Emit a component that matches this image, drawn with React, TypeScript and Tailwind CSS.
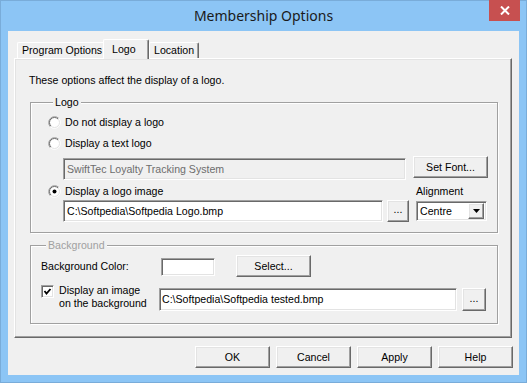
import React from "react";

const raised =
  "border border-t-white border-l-white border-r-[#696969] border-b-[#696969] shadow-[inset_-1px_-1px_0_#a0a0a0,inset_1px_1px_0_#e3e3e3] bg-[#f0f0f0]";
const sunken =
  "border border-t-[#a0a0a0] border-l-[#a0a0a0] border-r-white border-b-white shadow-[inset_1px_1px_0_#696969,inset_-1px_-1px_0_#e3e3e3]";
const group =
  "border border-[#a0a0a0] shadow-[1px_1px_0_white,inset_1px_1px_0_white]";

function Radio({ checked }: { checked?: boolean }) {
  return (
    <svg width="13" height="13" viewBox="0 0 13 13" className="shrink-0">
      <circle cx="6.5" cy="6.5" r="5.5" fill="white" />
      <path d="M2.26 10.74 A6 6 0 0 1 10.74 2.26" stroke="#a0a0a0" fill="none" />
      <path d="M10.74 2.26 A6 6 0 0 1 2.26 10.74" stroke="#ffffff" fill="none" />
      <path d="M2.96 10.04 A5 5 0 0 1 10.04 2.96" stroke="#696969" fill="none" />
      <path d="M10.04 2.96 A5 5 0 0 1 2.96 10.04" stroke="#e3e3e3" fill="none" />
      {checked && <circle cx="6.5" cy="6.5" r="2" fill="#000" />}
    </svg>
  );
}

function Check() {
  return (
    <div className={`${sunken} bg-white w-[13px] h-[13px] shrink-0 flex items-center justify-center`}>
      <svg width="9" height="9" viewBox="0 0 9 9">
        <polyline points="1.5,4 3.5,6.5 7.5,2" stroke="#000" strokeWidth="1.8" fill="none" />
      </svg>
    </div>
  );
}

function Btn({ label, className = "" }: { label: string; className?: string }) {
  return (
    <button className={`${raised} shrink-0 flex items-center justify-center text-[10.6px] text-black ${className}`}>
      {label}
    </button>
  );
}

function Window() {
  return (
    <div className="w-[527px] h-[383px] bg-[#8cc5f5] border border-[#79acd9] flex flex-col font-['Liberation_Sans',Arial,sans-serif] text-[10.6px] leading-[13px] text-black whitespace-nowrap select-none">
      {/* title bar */}
      <div className="relative h-[30px] flex items-center justify-center">
        <span className="font-['Noto_Sans',sans-serif] text-[14px] text-[#1a1a1a] -mt-[1px]">Membership Options</span>
        <div className="absolute right-[6px] top-[-1px] w-[31px] h-[21px] bg-[#c75050] flex items-center justify-center">
          <svg width="10" height="9" viewBox="0 0 10 9">
            <path d="M1 0.5 L9 8.5 M9 0.5 L1 8.5" stroke="white" strokeWidth="2" />
          </svg>
        </div>
      </div>

      {/* client */}
      <div className="ml-[7px] w-[511px] h-[344px] bg-[#f0f0f0] flex flex-col">
        {/* tabs */}
        <div className="ml-[9px] mt-[8px] h-[20px] -mb-[1px] flex items-start">
          <div className="shrink-0 mt-[3px] h-[16px] w-[86px] border-l border-t border-white rounded-tl-[2px] flex items-center pl-[4px]">
            Program Options
          </div>
          <div className="shrink-0 relative z-10 h-[20px] w-[46px] bg-[#f0f0f0] border-l border-t border-r border-l-white border-t-white border-r-[#696969] rounded-t-[2px] shadow-[inset_-1px_0_0_#a0a0a0] flex items-start pt-[3px] pl-[8px]">
            Logo
          </div>
          <div className="shrink-0 mt-[3px] h-[16px] w-[50px] border-l border-t border-r border-l-white border-t-white border-r-[#696969] rounded-t-[2px] shadow-[inset_-1px_0_0_#a0a0a0] flex items-center pl-[4px]">
            Location
          </div>
        </div>

        {/* panel */}
        <div className={`${raised} ml-[6px] w-[498px] h-[280px] flex flex-col`}>
          <p className="mt-[15px] ml-[14px]">These options affect the display of a logo.</p>

          <fieldset className={`${group} mt-[9px] ml-[15px] w-[468px] pl-[17px] pb-[10px]`}>
            <legend className="ml-[5px] px-[2px] bg-[#f0f0f0] leading-[13px]">Logo</legend>
            <div className="mt-[7px] h-[13px] flex items-center gap-[4px]">
              <Radio />
              <span>Do not display a logo</span>
            </div>
            <div className="mt-[8px] h-[13px] flex items-center gap-[4px]">
              <Radio />
              <span>Display a text logo</span>
            </div>
            <div className="mt-[6px] h-[24px] flex items-start ml-[15px]">
              <div className={`${sunken} mt-[2px] h-[22px] w-[343px] bg-[#f0f0f0] text-[#6d6d6d] flex items-center pl-[3px]`}>
                SwiftTec Loyalty Tracking System
              </div>
              <Btn label="Set Font..." className="ml-[7px] w-[75px] h-[22px]" />
            </div>
            <div className="mt-[5px] h-[13px] flex items-center">
              <div className="w-[368px] flex items-center gap-[4px]">
                <Radio checked />
                <span>Display a logo image</span>
              </div>
              <span>Alignment</span>
            </div>
            <div className="mt-[2px] h-[22px] flex items-start ml-[15px]">
              <div className={`${sunken} h-[22px] w-[320px] bg-white flex items-center pl-[3px]`}>
                C:\Softpedia\Softpedia Logo.bmp
              </div>
              <Btn label="..." className="ml-[4px] w-[22px] h-[22px] pb-[3px]" />
              <div className={`${sunken} ml-[7px] mt-[1px] w-[71px] h-[20px] bg-white flex items-center p-[2px]`}>
                <span className="flex-1 pl-[1px]">Centre</span>
                <div className={`${raised} w-[16px] h-[16px] flex items-center justify-center`}>
                  <svg width="7" height="4" viewBox="0 0 7 4">
                    <path d="M0 0 H7 L3.5 4 Z" fill="#000" />
                  </svg>
                </div>
              </div>
            </div>
          </fieldset>

          <fieldset className={`${group} mt-[6px] ml-[15px] w-[468px] pl-[10px] pb-[12px]`}>
            <legend className="ml-[5px] px-[2px] bg-[#f0f0f0] leading-[13px] text-[#a0a0a0]">Background</legend>
            <div className="mt-[3px] h-[22px] flex items-start">
              <span className="w-[120px] h-[22px] flex items-center">Background Color:</span>
              <div className={`${sunken} mt-[3px] w-[54px] h-[18px] bg-white`} />
              <Btn label="Select..." className="ml-[21px] w-[75px] h-[22px]" />
            </div>
            <div className="mt-[8px] h-[26px] flex items-start">
              <div className="w-[118px] flex items-start">
                <Check />
                <span className="ml-[5px] -mt-[1px] leading-[12.5px]">
                  Display an image
                  <br />
                  on the background
                </span>
              </div>
              <div className={`${sunken} mt-[3px] h-[23px] w-[298px] bg-white flex items-center pl-[2px]`}>
                C:\Softpedia\Softpedia tested.bmp
              </div>
              <Btn label="..." className="ml-[5px] mt-[3px] w-[24px] h-[23px] pb-[3px]" />
            </div>
          </fieldset>
        </div>

        {/* dialog buttons */}
        <div className="mt-[8px] mr-[6px] flex justify-end gap-[6px]">
          <Btn label="OK" className="w-[75px] h-[22px]" />
          <Btn label="Cancel" className="w-[75px] h-[22px]" />
          <Btn label="Apply" className="w-[75px] h-[22px]" />
          <Btn label="Help" className="w-[75px] h-[22px]" />
        </div>
      </div>
    </div>
  );
}

export default function App() {
  return <Window />;
}
